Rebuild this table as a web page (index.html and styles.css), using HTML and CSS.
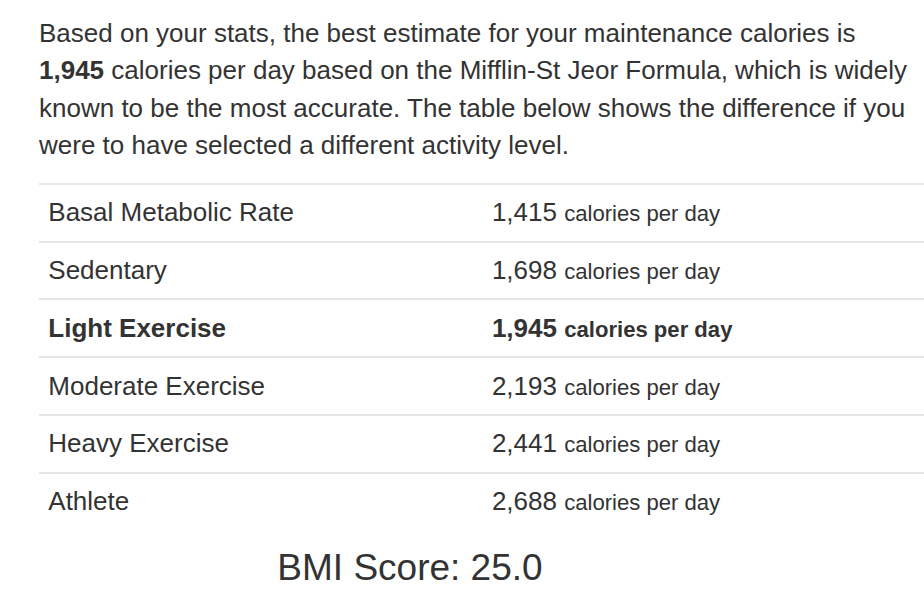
FILE: index.html
```html
<!DOCTYPE html>
<html lang="en">
<head>
<meta charset="utf-8">
<title>Maintenance Calories</title>
<link rel="stylesheet" href="styles.css">
</head>
<body>
<div class="page">
  <p class="intro">Based on your stats, the best estimate for your maintenance calories is <strong>1,945</strong> calories per day based on the Mifflin-St Jeor Formula, which is widely known to be the most accurate. The table below shows the difference if you were to have selected a different activity level.</p>
  <table class="levels">
    <tbody>
      <tr><td class="label">Basal Metabolic Rate</td><td class="value">1,415 <small>calories per day</small></td></tr>
      <tr><td class="label">Sedentary</td><td class="value">1,698 <small>calories per day</small></td></tr>
      <tr class="current"><td class="label">Light Exercise</td><td class="value">1,945 <small>calories per day</small></td></tr>
      <tr><td class="label">Moderate Exercise</td><td class="value">2,193 <small>calories per day</small></td></tr>
      <tr><td class="label">Heavy Exercise</td><td class="value">2,441 <small>calories per day</small></td></tr>
      <tr><td class="label">Athlete</td><td class="value">2,688 <small>calories per day</small></td></tr>
    </tbody>
  </table>
  <h4 class="bmi">BMI Score: 25.0</h4>
</div>
</body>
</html>
```

FILE: styles.css
```css
html, body {
  margin: 0;
  padding: 0;
  background: #ffffff;
  overflow: hidden;
}
body {
  font-family: "Liberation Sans", Arial, Helvetica, sans-serif;
  font-size: 26px;
  line-height: 1.42857;
  color: #333333;
}
.page {
  padding: 15px 0 0 39px;
  width: 885px;
}
.intro {
  margin: 0 0 18.4px 0;
  line-height: 37.4px;
}
.intro strong {
  font-weight: bold;
}
.levels {
  width: 100%;
  border-collapse: collapse;
  border-spacing: 0;
}
.levels td {
  padding: 9.3px 9.3px;
  border-top: 2px solid #e6e6e6;
  vertical-align: top;
  line-height: 1.42857;
}
.levels td.label {
  width: 425px;
}
.levels small {
  font-size: 85%;
}
.levels tr.current td {
  font-weight: bold;
}
.bmi {
  width: 742px;
  margin: 19px 0 0 0;
  text-align: center;
  font-size: 37px;
  font-weight: 500;
  line-height: 1.1;
  color: #333333;
}
```
